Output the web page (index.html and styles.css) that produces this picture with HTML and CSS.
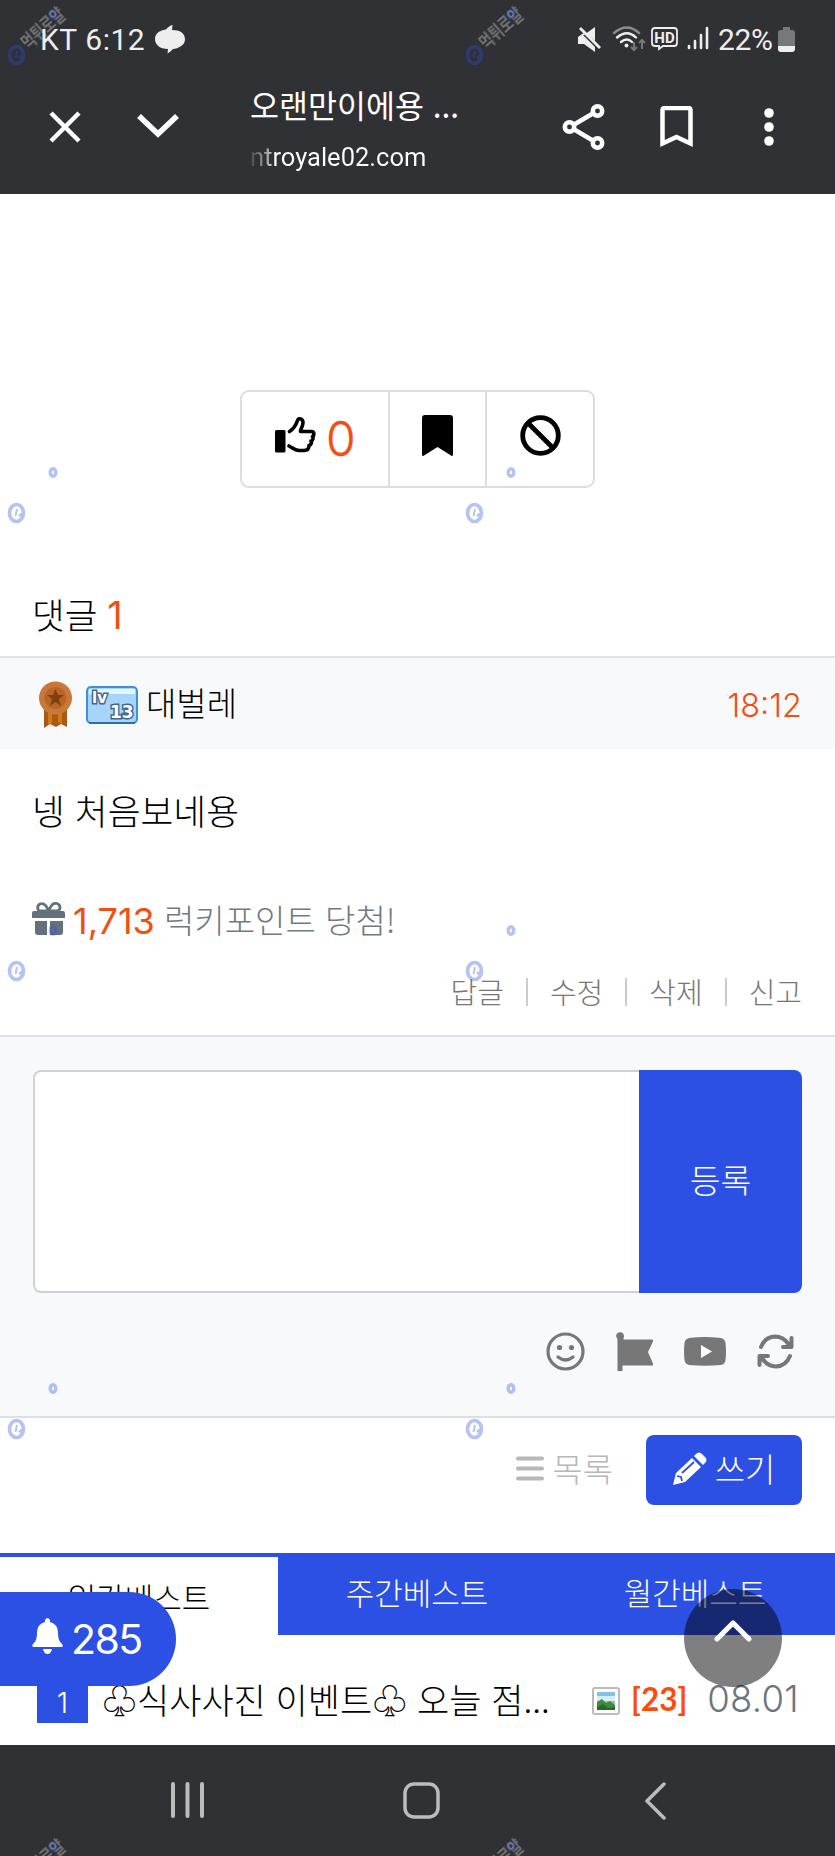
FILE: index.html
```html
<!DOCTYPE html>
<html lang="ko">
<head>
<meta charset="utf-8">
<title>오랜만이에용</title>
<link rel="stylesheet" href="styles.css">
</head>
<body>
<div class="screen">
  <header class="browser">
    <div class="status">
      <span class="clock">KT 6:12</span>
      <svg class="swirl" width="30" height="29" viewBox="0 0 30 29"><path fill="#eee" d="M17.500 0l-.5 5c8 0 13 3 13 9.500 0 6-7 9-12 9.500-2 2-4 4-5.500 4.500l.5-4.500C5 24 0 20 0 14 0 7 7 5 11 4.500 13 2 15.500.5 17.500 0z"/></svg>
      <svg class="status-icons" width="140" height="27" viewBox="0 0 140 27">
        <g fill="#eee"><path d="M0 9h6L17 1v14L10 9l-3-3-7 5zM0 9v9h6l11 8v-5L5 9z"/><path d="M1 3l2-2 20 20-2 2z"/></g>
        <g fill="none" stroke-width="2.4" stroke-linecap="round"><path stroke="#8b8c8e" d="M36 7Q49-4 61 7"/><path stroke="#eee" d="M39 11.500Q49 3 58 11.500M43 16Q49 11 54 16"/></g>
        <circle cx="48.500" cy="19.500" r="2" fill="#eee"/>
        <path stroke="#777" stroke-width="2" fill="none" d="M56 16v8m-3-3 3 3 3-3M64 23v-9m-3 3 3-3 3 3"/>
        <path fill="none" stroke="#eee" stroke-width="1.800" d="M77 2h19q3 0 3 3v12q0 3-3 3H85l-4 3v-3h-4q-3 0-3-3V5q0-3 3-3z"/>
        <text x="86.500" y="16.500" text-anchor="middle" class="hd">HD</text>
        <path stroke="#eee" stroke-width="2.600" stroke-linecap="round" d="M111 20v2M117 15v7M123 9v13M129 2v20"/>
      </svg>
      <span class="percent">22%</span>
      <svg class="battery" width="17" height="25" viewBox="0 0 17 25"><path fill="#77787a" d="M5 0h7v3h2q3 0 3 3v13H0V6q0-3 3-3h2z"/><path fill="#eee" d="M0 19h17v3q0 3-3 3H3q-3 0-3-3z"/></svg>
    </div>
    <div class="toolbar">
      <svg class="close" width="32" height="32" viewBox="0 0 32 32"><path d="M2 2l28 28M30 2 2 30"/></svg>
      <svg class="down" width="42" height="25" viewBox="0 0 42 25"><path d="M2 3l19 18L40 3"/></svg>
      <div class="page-id"><div class="page-title">오랜만이에용 ...</div><div class="page-url"><span>ntroyale02.com</span></div></div>
      <svg class="share" width="44" height="48" viewBox="0 0 44 48"><path d="M8 24 35 8M8 24l27 16"/><g class="nodes"><circle cx="7.500" cy="24" r="4.700"/><circle cx="35.500" cy="8" r="4.700"/><circle cx="35.500" cy="40" r="4.700"/></g></svg>
      <svg class="mark" width="33" height="42" viewBox="0 0 33 42"><path d="M2.500 37.500V4q0-2 2-2h24q2 0 2 2v33.500l-14-6.500z"/></svg>
      <svg class="dots" width="10" height="38" viewBox="0 0 10 38"><circle cx="5" cy="5" r="4.800"/><circle cx="5" cy="19" r="4.800"/><circle cx="5" cy="33" r="4.800"/></svg>
    </div>
  </header>

  <main>
    <section class="reactions">
      <div class="react like">
        <svg width="41" height="36" viewBox="0 0 41 36"><rect y="13" width="10.500" height="22.500" rx="1.500"/><path fill="none" stroke="#000" stroke-width="3.600" stroke-linejoin="round" stroke-linecap="round" d="M14.500 14.500c5-3 7-8 8-11 1-3 5.500-2 5.500 2 0 4-2.500 6-2.500 9h11c3 0 3 4 1 5 1 1.500.5 4-1.500 4.500 1 2 0 4-2 4.500 0 4-2 5-5 5h-5c-4 0-7-3-10-4.500"/></svg>
        <span>0</span>
      </div>
      <div class="react"><svg width="31" height="41" viewBox="0 0 31 41"><path d="M0 3q0-3 3-3h25q3 0 3 3v36q0 3-2 1.500L15.500 32 2 40.500Q0 42 0 39z"/></svg></div>
      <div class="react last"><svg width="41" height="41" viewBox="0 0 41 41"><g fill="none" stroke="#000" stroke-width="4.800"><circle cx="20.500" cy="20.500" r="17.800"/><path d="M8 8l25 25"/></g></svg></div>
    </section>

    <h2 class="comment-count">댓글 <b>1</b></h2>
    <article>
      <div class="author">
        <svg width="35" height="47" viewBox="0 0 35 47"><path fill="#a95a12" d="M6 25h23v21l-6-3-5 3-6-3-6 4z"/><path fill="#d07a1c" d="M10 29h4v13l-4 2zm10 0h4v14l-4-2z"/><circle cx="17.500" cy="17" r="16.500" fill="#c9783a"/><circle cx="17.500" cy="17" r="11" fill="#b9652a"/><path fill="#80400e" d="m17.500 8 2.500 6h6l-5 4 2 7-5.500-4-5.500 4 2-7-5-4h6z"/></svg>
        <svg width="52" height="38" viewBox="0 0 52 38"><rect x="1" y="1" width="50" height="36" rx="4" fill="#a5d5fb" stroke="#3d91d8" stroke-width="2"/><path fill="#e6f5ff" d="M3 3h46v5H3z"/><path stroke="#2f6ea8" stroke-width="2" d="M3 37h46"/><text x="6" y="17" class="lv">lv</text><text x="24" y="32" class="lv num">13</text></svg>
        <span class="name">대벌레</span><time>18:12</time>
      </div>
      <p class="body">넹 처음보네용</p>
      <p class="lucky">
        <svg width="33" height="34" viewBox="0 0 33 34"><path fill="#64707b" d="M0 11q0-2 2-2h29q2 0 2 2v5H0zM3 19h12v14H6q-3 0-3-3zm15 0h13v11q0 3-3 3H18z"/><path fill="none" stroke="#64707b" stroke-width="2.800" d="M16.500 9C14 2 11 1 8 2 4 4 6 9 8 9h17c4-1 4-6 0-7.500-4-1-6 2-8.500 7.500z"/></svg>
        <b>1,713</b><span>럭키포인트 당첨!</span>
      </p>
      <div class="actions"><span>답글</span><i></i><span>수정</span><i></i><span>삭제</span><i></i><span>신고</span></div>
    </article>

    <form class="reply">
      <div class="entry"><div class="field"></div><div class="submit"><span>등록</span></div></div>
      <div class="tools">
        <svg width="39" height="39" viewBox="0 0 39 39"><g fill="none" stroke="#777" stroke-width="3.200" stroke-linecap="round"><circle cx="19.500" cy="19.500" r="17.500"/><path d="M12 25q7.500 6 15 0"/></g><g fill="#777"><circle cx="13.500" cy="15.500" r="2.600"/><circle cx="25.500" cy="15.500" r="2.600"/></g></svg>
        <svg width="37" height="39" viewBox="0 0 37 39"><path fill="#777" d="M1.500 7Q-1 4 1 1.500 3-.5 6 .5q3 2 1.500 6v1H36q2 0 1 2l-5 10.500 5 11.500q1 2-1 2H6.500V39h-5z"/></svg>
        <svg width="42" height="29" viewBox="0 0 42 29"><path fill="#777" d="M5 1Q21-1 37 1q4 1 4.500 5 1 8.500 0 17-.5 4-4.500 5-16 1.500-32 0-4-1-4.500-5-1-8.500 0-17Q1 2 5 1z"/><path fill="#fff" d="m17 8 11 6.500L17 21z"/></svg>
        <svg width="37" height="35" viewBox="0 0 37 35"><g fill="none" stroke="#777" stroke-width="4" stroke-linecap="round" stroke-linejoin="round"><path d="M4 13Q8 3 18 2.500q8 0 13 7M34.500 4v9H26M33 22q-4 10-14 10.500-8 0-13-7M2.500 31v-9H11"/></g><path fill="#777" d="m35 5v9H26zM2 30V21h9z"/></svg>
      </div>
    </form>

    <div class="board-buttons">
      <div class="list"><svg width="28" height="25" viewBox="0 0 28 25"><path stroke="#b8b8b8" stroke-width="4" stroke-linecap="round" d="M2 2.500h24M2 12.500h24M2 22.500h24"/></svg><span>목록</span></div>
      <div class="write"><svg width="34" height="34" viewBox="0 0 34 34"><path fill="#fff" d="M0 33 3 21 19 6l9 9-16 15zM21 4l2-2q3-3 6 0l3 3q3 3 0 6l-2 2z"/><path stroke="#2c50e3" stroke-width="1.800" fill="none" d="m9 21 12-11M4 24l4 1 1 4"/></svg><span>쓰기</span></div>
    </div>

    <nav class="tabs"><div class="tab active">일간베스트</div><div class="tab">주간베스트</div><div class="tab">월간베스트</div></nav>
    <div class="post">
      <span class="rank">1</span><span class="subject">♧식사사진 이벤트♧ 오늘 점...</span>
      <svg width="28" height="28" viewBox="0 0 28 28"><rect x="1" y="1" width="26" height="26" rx="2" fill="#fff" stroke="#bbb" stroke-width="2"/><path fill="#83c3e2" d="M5 5h18v18H5z"/><path fill="#d5edf5" d="M5 9h18v5H5z"/><path fill="#3f8c35" d="m5 15 5-3 4 4 4-2 5 4v5H5z"/><path fill="#266b2c" d="m5 20 6-3 5 4 7-1v3H5z"/></svg>
      <span class="replies">[23]</span><span class="date">08.01</span>
    </div>
  </main>

  <div class="bell"><svg width="31" height="36" viewBox="0 0 31 36"><path fill="#fff" d="M13 2q2.500-4 5 0v2q8 2 8 11 0 8 4 11 2 3-1 3H2q-3 0-1-3 4-3 4-11 0-9 8-11zM11 31h9q-1 5-4.500 5T11 31z"/></svg><span>285</span></div>
  <div class="to-top"><svg width="40" height="24" viewBox="0 0 40 24"><path fill="none" stroke="#fff" stroke-width="5.200" stroke-linecap="round" stroke-linejoin="round" d="M4 20 20 4l16 16"/></svg></div>

  <footer class="system-nav">
    <svg width="35" height="36" viewBox="0 0 35 36"><path stroke-width="4" d="M3 2v32M17.500 2v32M32 2v32"/></svg>
    <svg width="37" height="37" viewBox="0 0 37 37"><rect x="2" y="2" width="33" height="33" rx="9"/></svg>
    <svg width="22" height="38" viewBox="0 0 22 38"><path d="M20 2 3 19l17 17"/></svg>
  </footer>

  <svg class="watermarks" width="835" height="1856" viewBox="0 0 835 1856">
    <defs>
      <g id="logo"><g fill="none" stroke="#2b50e0"><ellipse cx="16.500" cy="55" rx="7" ry="8.500" stroke-width="3.600"/><path stroke-width="2" d="m17 51-1.500 7"/><path stroke-width="3" d="m19 58 5-3"/><ellipse cx="53" cy="14.500" rx="2.800" ry="3.800" stroke-width="3.400"/></g></g>
      <g id="brand"><text class="brand" transform="translate(28 50) rotate(-41)" textLength="51" lengthAdjust="spacingAndGlyphs">먹튀로얄</text></g>
    </defs>
    <g opacity=".35"><use href="#logo"/><use href="#logo" x="458"/><use href="#logo" y="458"/><use href="#logo" x="458" y="458"/><use href="#logo" y="916"/><use href="#logo" x="458" y="916"/><use href="#logo" y="1374"/><use href="#logo" x="458" y="1374"/><use href="#logo" y="1832"/><use href="#logo" x="458" y="1832"/></g>
    <g opacity=".35"><use href="#brand"/><use href="#brand" x="458"/><use href="#brand" y="1832"/><use href="#brand" x="458" y="1832"/></g>
  </svg>
</div>
</body>
</html>
```
FILE: styles.css
```css
* { box-sizing: border-box; }
body { margin: 0; background: #fff; font-family: "Noto Sans CJK KR", sans-serif; font-weight: 300; color: #000; }
svg { display: block; flex: none; }
h2, p { margin: 0; font-weight: 300; }
b { font-weight: 400; color: #f24e13; }
span, time { white-space: nowrap; }
.screen { position: relative; width: 835px; height: 1856px; overflow: hidden; display: flex; flex-direction: column; }
main { height: 1551px; flex: none; overflow: hidden; }

.browser { height: 194px; flex: none; background: #303134; color: #fff; }
.status { height: 78px; display: flex; align-items: center; padding-left: 40px; font: 400 30px Roboto, sans-serif; color: #eee; }
.clock { width: 115px; letter-spacing: .55px; }
.swirl { margin-right: 393px; }
.status-icons { width: 140px; }
.percent { width: 60px; font-size: 30px; letter-spacing: -.3px; }
.battery { margin-left: 0; }
.hd { font: 700 15px Roboto, sans-serif; fill: #eee; }
.toolbar { height: 116px; display: flex; align-items: flex-start; padding-left: 49px; }
.toolbar svg { fill: none; stroke: #fff; stroke-width: 4.500; }
.toolbar .nodes { fill: #303134; }
.close { margin-top: 33px; }
.toolbar .down { margin: 35px 0 0 56px; stroke-width: 5.600; }
.page-id { width: 279px; margin: 6px 0 0 71px; }
.page-title { height: 41px; line-height: 41px; font-size: 31.500px; font-weight: 400; white-space: nowrap; }
.page-url { height: 48px; display: flex; align-items: center; padding-top: 16px; font: 400 25.500px Roboto, sans-serif; }
.page-url span { background: linear-gradient(90deg, #45464a 0, #aaa 18px, #fff 24px); background-clip: text; -webkit-background-clip: text; color: transparent; }
.share { margin: 25px 0 0 33px; }
.mark { margin: 28px 0 0 54px; }
.toolbar .dots { margin: 30px 0 0 71px; fill: #fff; stroke: none; }

.reactions { display: flex; width: 355px; height: 98px; margin: 196px 0 0 240px; border: 2px solid #ddd; border-radius: 9px; }
.react { display: flex; flex: none; width: 97px; justify-content: center; padding-top: 23px; border-right: 2px solid #ddd; }
.like { width: 148px; gap: 10px; justify-content: flex-start; padding-left: 33px; }
.like svg { margin-top: 2px; }
.like span { font: 300 48px/48px Inter, sans-serif; color: #f24e13; -webkit-text-stroke: .4px #f24e13; }
.last { width: 106px; border: 0; }

.comment-count { height: 168px; padding: 102px 0 0 32px; font-size: 35.500px; line-height: 48px; }
.comment-count b { font: 400 38px/40px Inter, sans-serif; margin-left: 0; }
.author { height: 93px; border-top: 2px solid #dfe1e3; background: #f8f9fb; display: flex; align-items: center; padding: 2px 33px 0 38px; }
.author svg + svg { margin-left: 13px; }
.lv { font: 700 15px "DejaVu Sans", sans-serif; fill: #fff; stroke: #43678b; stroke-width: 3px; paint-order: stroke; }
.num { font-size: 17px; }
.name { margin: -5px 0 0 8px; font-size: 33px; }
time { margin: 2px 0 0 auto; font: 300 32.500px Inter, sans-serif; color: #f24e13; }
.body { height: 126px; padding: 36px 0 0 32px; font-size: 35.700px; line-height: 50px; }
.lucky { height: 88px; padding: 0 0 0 32px; display: flex; align-items: center; font-size: 33px; color: #727a81; }
.lucky b { margin: 4px 8px 0 8px; width: 83px; font: 400 36px Inter, sans-serif; white-space: nowrap; }
.actions { height: 72px; padding: 0 33px 14px 0; display: flex; align-items: center; justify-content: flex-end; font-size: 29px; color: #777; }
.actions span { margin-top: -3px; }
.actions i { width: 2px; height: 28px; background: #ccc; margin: 0 22px; }

.reply { height: 383px; border-top: 2px solid #dee1e5; border-bottom: 2px solid #dddfe2; background: #f8f9fb; padding: 33px 33px 0; }
.entry { display: flex; height: 223px; }
.field { width: 606px; border: 2px solid #ced1d6; border-right: 0; border-radius: 8px 0 0 8px; background: #fff; }
.submit { width: 163px; border-radius: 0 8px 8px 0; background: #2c50e3; color: #fff; display: flex; align-items: center; justify-content: center; font-size: 33.500px; padding-bottom: 7px; }
.tools { height: 116px; display: flex; align-items: center; justify-content: flex-end; gap: 31px; padding-right: 8px; }
.board-buttons { height: 135px; display: flex; padding: 17px 33px 0 0; justify-content: flex-end; }
.list { display: flex; align-items: center; height: 70px; margin-right: 33px; color: #b8b8b8; font-size: 33px; gap: 8px; }
.list svg { margin-top: -3px; }
.list span, .write span { margin-top: -5px; }
.write { width: 156px; height: 70px; border-radius: 8px; background: #2c50e3; color: #fff; display: flex; align-items: center; justify-content: center; gap: 8px; font-size: 33px; }
.write svg { margin-top: -3px; }

.tabs { display: flex; height: 82px; background: #2c50e3; color: #fff; font-size: 31px; }
.tab { width: 278px; display: flex; align-items: center; justify-content: center; flex: none; padding-bottom: 5px; }
.tab.active { height: 78px; margin-top: 4px; padding-bottom: 0; background: #fff; color: #000; }
.post { height: 109px; display: flex; align-items: center; padding: 19px 36px 0 37px; font-size: 35px; }
.rank { width: 51px; height: 51px; margin-top: -3px; background: #2c50e3; color: #fff; text-align: center; font: 300 29px/62px Inter, sans-serif; }
.subject { width: 490px; margin: -2px 0 0 14px; overflow: hidden; }
.post svg { margin-top: 4px; }
.replies { margin-left: 11px; font: 700 31.500px Lato, sans-serif; color: #ff4b0a; }
.date { margin-left: auto; font: 300 36.500px Inter, sans-serif; letter-spacing: .3px; color: #6c757d; }

.bell { position: absolute; left: 0; top: 1592px; width: 176px; height: 94px; border-radius: 0 47px 47px 0; background: #2c50e3; color: #fff; display: flex; align-items: center; gap: 8px; padding: 0 0 6px 32px; font: 400 41px Inter, sans-serif; letter-spacing: -1.500px; }
.bell span { margin-top: 5px; }
.to-top { position: absolute; left: 684px; top: 1589px; width: 98px; height: 98px; border-radius: 50%; background: rgba(0, 0, 0, .5); padding: 30px 29px; }
.system-nav { height: 111px; flex: none; background: #303134; display: flex; align-items: flex-start; padding: 37px 0 0 170px; }
.system-nav svg { fill: none; stroke: #bcbcbc; stroke-width: 3.500; stroke-linecap: round; stroke-linejoin: round; }
.system-nav svg:nth-child(2) { margin-left: 198px; }
.system-nav svg:nth-child(3) { margin-left: 204px; }
.watermarks { position: absolute; inset: 0; pointer-events: none; }
.brand { font: 700 18px "Noto Sans CJK KR", sans-serif; fill: #eee; }
```
